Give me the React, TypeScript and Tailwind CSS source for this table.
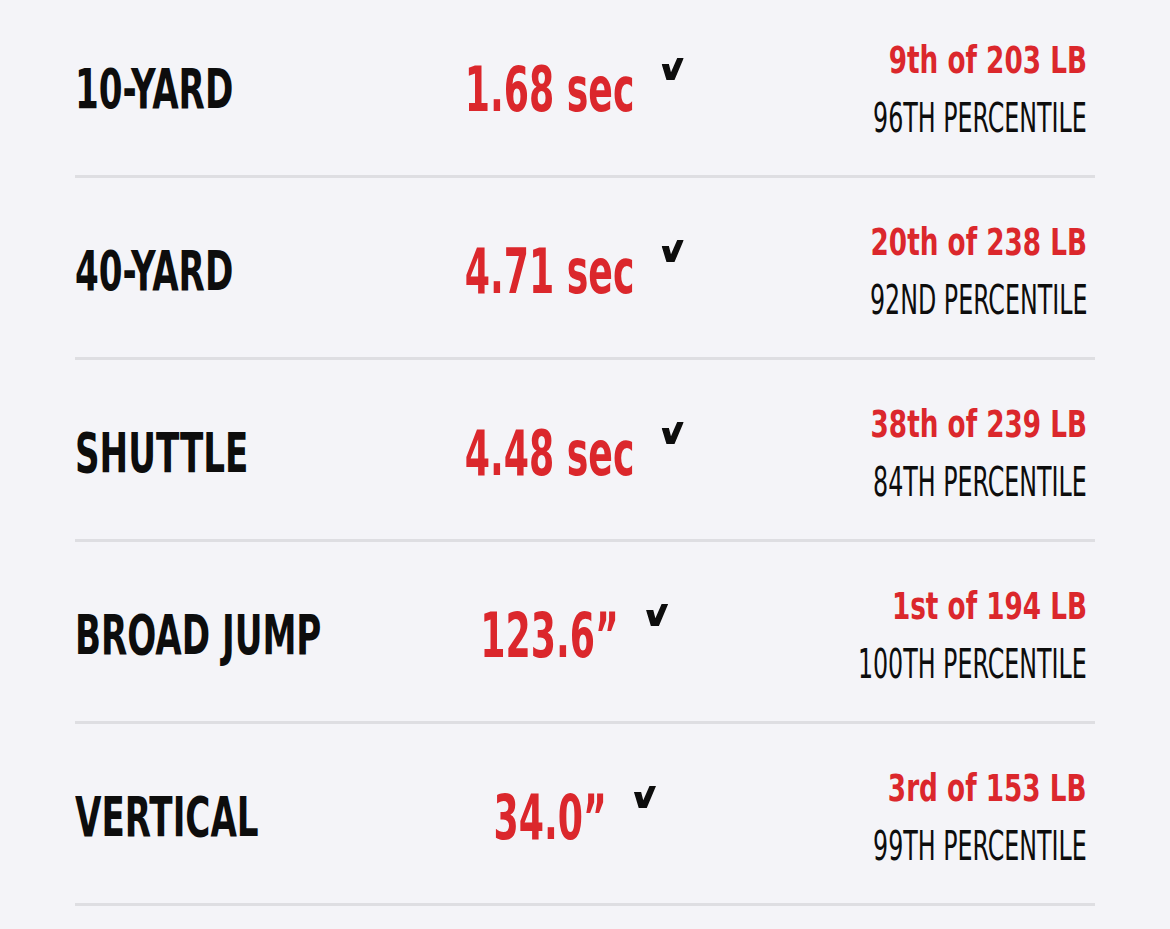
import React from "react";

const rows = [
  { label: "10-YARD", value: "1.68 sec", rank: "9th of 203 LB", pct: "96TH PERCENTILE" },
  { label: "40-YARD", value: "4.71 sec", rank: "20th of 238 LB", pct: "92ND PERCENTILE" },
  { label: "SHUTTLE", value: "4.48 sec", rank: "38th of 239 LB", pct: "84TH PERCENTILE" },
  { label: "BROAD JUMP", value: "123.6\u201D", rank: "1st of 194 LB", pct: "100TH PERCENTILE" },
  { label: "VERTICAL", value: "34.0\u201D", rank: "3rd of 153 LB", pct: "99TH PERCENTILE" },
];

// the value text is squeezed with scale-x-[0.65]; the check sits inside it, so its
// width and offset are pre-divided by 0.65 to come out at 22px / 28px on screen
function Check() {
  return (
    <svg
      width="34"
      height="22"
      viewBox="0 0 22 20"
      preserveAspectRatio="none"
      className="absolute left-full top-[15px] ml-[42px]"
    >
      <path d="M0 5.5 L7.2 5.5 L9.3 13 L15.5 0 L22 0 L12.8 20 L4.8 20 Z" fill="#0d0d0d" />
    </svg>
  );
}

export default function App() {
  return (
    <div className="flex min-h-screen flex-col bg-[#f4f4f8] font-['DejaVu_Sans_Condensed','DejaVu_Sans',sans-serif]">
      <div className="mx-[75px] mt-[-4px] w-[1020px]">
        {rows.map((r) => (
          <div
            key={r.label}
            className="grid h-[182px] grid-cols-[300px_350px_1fr] items-center border-b-[3px] border-[#dedee2] pt-[8px]"
          >
            <div className="origin-left scale-x-[0.69] whitespace-nowrap text-[55px] font-bold text-[#0d0d0d]">
              {r.label}
            </div>
            <div className="flex justify-center">
              <span className="relative inline-block origin-center scale-x-[0.65] whitespace-nowrap text-[62px] font-bold text-[#db272c]">
                {r.value}
                <Check />
              </span>
            </div>
            <div className="flex flex-col items-end pr-2">
              <span className="origin-right scale-x-[0.79] whitespace-nowrap text-[37px] font-bold leading-[56px] text-[#db272c]">
                {r.rank}
              </span>
              <span className="origin-right scale-x-[0.66] whitespace-nowrap text-[40px] leading-[58px] text-[#0d0d0d]">
                {r.pct}
              </span>
            </div>
          </div>
        ))}
      </div>
    </div>
  );
}
